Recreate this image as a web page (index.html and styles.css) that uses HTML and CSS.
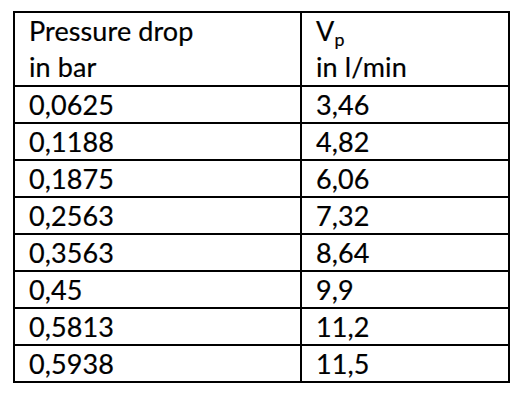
FILE: index.html
```html
<!DOCTYPE html>
<html lang="en">
<head>
    <meta charset="UTF-8">
    <meta name="viewport" content="width=device-width, initial-scale=1.0">
    <title>Pressure drop</title>
    <link rel="stylesheet" href="styles.css">
</head>
<body>
    <table class="data">
        <tr class="head">
            <td class="first">Pressure drop<br>in bar</td>
            <td class="second">V<sub>p</sub><br>in l/min</td>
        </tr>
        <tr><td class="first">0,0625</td><td class="second">3,46</td></tr>
        <tr><td class="first">0,1188</td><td class="second">4,82</td></tr>
        <tr><td class="first">0,1875</td><td class="second">6,06</td></tr>
        <tr><td class="first">0,2563</td><td class="second">7,32</td></tr>
        <tr><td class="first">0,3563</td><td class="second">8,64</td></tr>
        <tr><td class="first">0,45</td><td class="second">9,9</td></tr>
        <tr><td class="first">0,5813</td><td class="second">11,2</td></tr>
        <tr><td class="first">0,5938</td><td class="second">11,5</td></tr>
    </table>
</body>
</html>
```

FILE: styles.css
```css
body {
    margin: 0;
    background-color: white;
    font-family: Lato, "Noto Sans", sans-serif;
    color: black;
}
.data {
    margin: 11px 0 0 13px;
    border-collapse: separate;
    border-spacing: 0;
    border-top: 2px solid black;
    border-left: 2px solid black;
    font-size: 27px;
    letter-spacing: 0.1px;
    -webkit-text-stroke: 0.2px black;
}
.data td {
    padding: 0 0 0 14px;
    line-height: 35px;
    height: 35px;
    border-right: 2px solid black;
    border-bottom: 2px solid black;
    vertical-align: top;
    white-space: nowrap;
}
.data .head td {
    line-height: 36px;
    height: 72px;
}
.first {
    width: 271px;
}
.second {
    width: 192px;
}
sub {
    font-size: 0.66em;
    line-height: 0;
    vertical-align: -0.26em;
}
```
